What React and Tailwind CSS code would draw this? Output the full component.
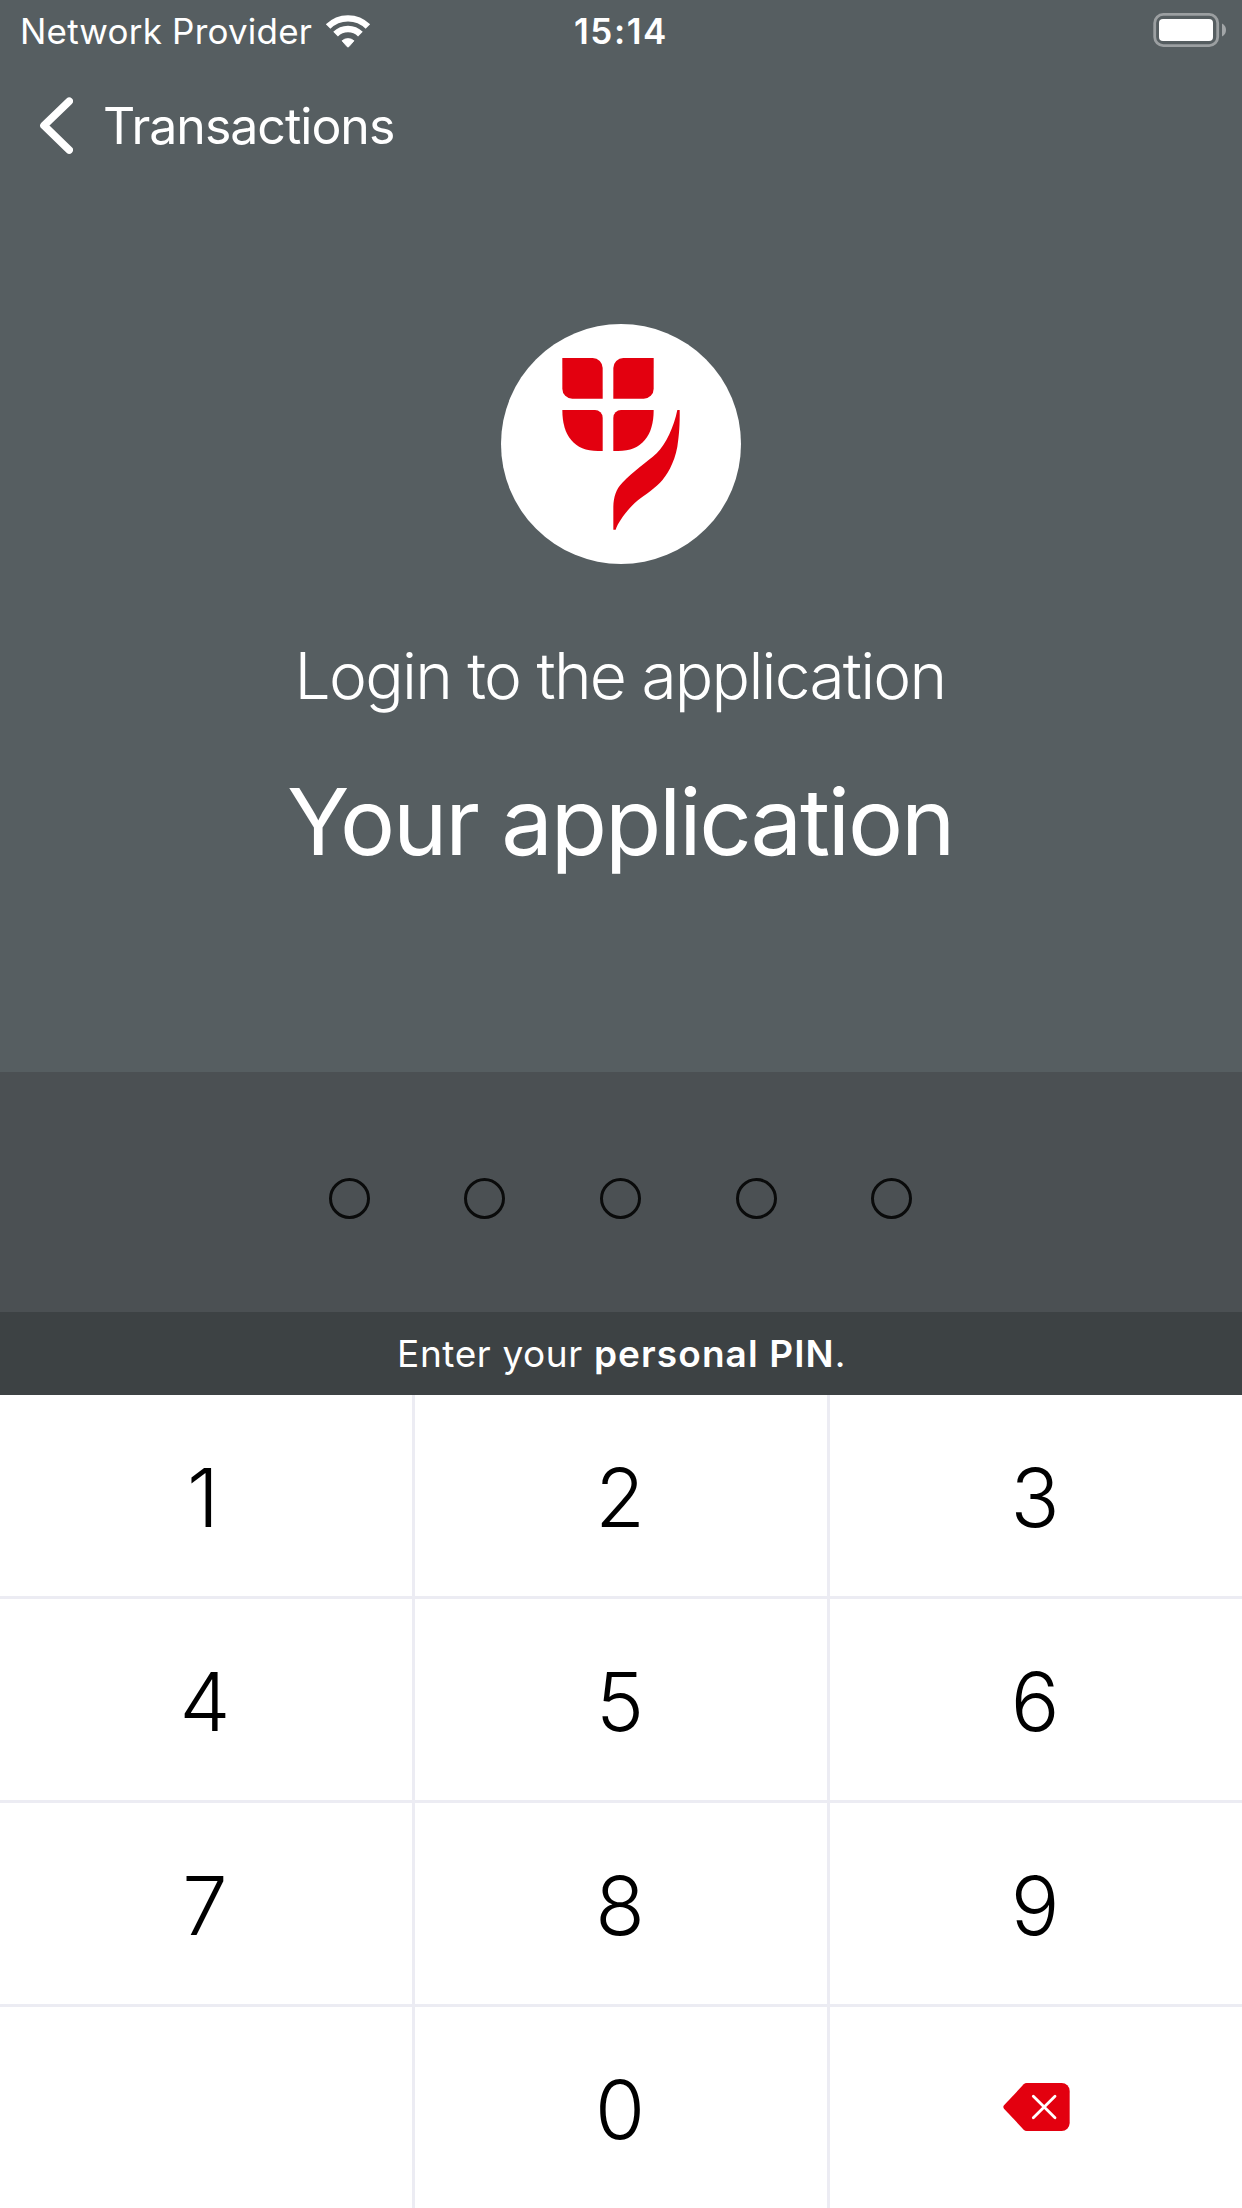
import React, { useState } from "react";

const PIN_LENGTH = 5;
const KEYS = ["1", "2", "3", "4", "5", "6", "7", "8", "9", "", "0", "del"];

const WifiIcon = () => (
  <svg width="46" height="36" viewBox="0 0 46 36" fill="none">
    <path d="M3.1 12.6A28.2 28.2 0 0 1 42.9 12.6" stroke="white" strokeWidth="6.4" />
    <path d="M10.6 20.1A17.5 17.5 0 0 1 35.4 20.1" stroke="white" strokeWidth="6.6" />
    <path
      d="M17 26.8A9.2 9.2 0 0 1 29 26.8L23.8 32.7Q23 33.5 22.2 32.7Z"
      fill="white"
      stroke="white"
      strokeWidth="0.8"
      strokeLinejoin="round"
    />
  </svg>
);

const BatteryIcon = () => (
  <svg width="73" height="34" viewBox="0 0 73 34">
    <rect x="1.7" y="1.4" width="63" height="31.2" rx="8.5" fill="none" stroke="#9b9fa1" strokeWidth="2.8" />
    <rect x="6" y="6" width="54" height="22" rx="4" fill="white" />
    <path d="M69 10.5C71.8 12 73 14.3 73 17C73 19.7 71.8 22 69 23.5Z" fill="#a2a6a8" />
  </svg>
);

const BackIcon = () => (
  <svg width="33" height="58" viewBox="0 0 33 58" fill="none">
    <path
      d="M29.2 4.2L4 28.6L29.2 53"
      stroke="white"
      strokeWidth="7.6"
      strokeLinecap="round"
      strokeLinejoin="round"
    />
  </svg>
);

const Logo = () => (
  <svg className="size-60" viewBox="33 42 720 720">
    <circle cx="393" cy="402" r="360" fill="white" />
    <g fill="#e3000f">
      <path d="M217 144H308A30 30 0 0 1 338 174V266H247A30 30 0 0 1 217 236Z" />
      <path d="M491 144H400A30 30 0 0 0 370 174V266H461A30 30 0 0 0 491 236Z" />
      <path d="M217 300H315A23 23 0 0 1 338 323V423H324C252 423 217 377 217 300Z" />
      <path d="M491 300H393A23 23 0 0 0 370 323V423H384C456 423 491 377 491 300Z" />
      <path d="M562 300H569C570 350 566 385 562 410C553 460 530 497 510 518C485 543 455 560 435 578C410 602 385 635 377 659H370V590C371 560 378 537 397 518C430 484 470 457 500 430C528 402 552 350 562 300Z" />
    </g>
  </svg>
);

const DeleteIcon = () => (
  <svg width="67" height="48" viewBox="68 69 201 144">
    <path
      d="M139 69H244A24 24 0 0 1 268 93V189A24 24 0 0 1 244 213H139Q134 213 130 209L71 146Q67 141 71 136L130 73Q134 69 139 69Z"
      fill="#e3000f"
    />
    <path d="M159 109L224 173M224 109L159 173" stroke="white" strokeWidth="8.5" strokeLinecap="round" />
  </svg>
);

export default function App() {
  const [pin, setPin] = useState("");

  const handleKey = (key) => {
    if (key === "del") {
      setPin(pin.slice(0, -1));
    } else if (key && pin.length < PIN_LENGTH) {
      setPin(pin + key);
    }
  };

  return (
    <div className="flex h-[2208px] w-full flex-col bg-[#565e61] font-['Inter','Liberation_Sans',sans-serif] text-white">
      <div className="flex h-[1072px] flex-col">
        {/* Status bar */}
        <div className="grid h-[63px] grid-cols-[1fr_auto_1fr] items-center pl-5 pr-4">
          <div className="flex items-center gap-[13px]">
            <span className="text-[35px] leading-[63px] tracking-[0.2px]">Network Provider</span>
            <WifiIcon />
          </div>
          <span className="pr-1 text-[35px] font-semibold leading-[63px] tracking-[1.6px]">15:14</span>
          <div className="flex justify-end pb-[3px]">
            <BatteryIcon />
          </div>
        </div>

        {/* Navigation */}
        <div className="flex h-[126px] items-center gap-[30px] pl-10">
          <BackIcon />
          <span className="text-[50px] leading-[60px] tracking-[-1px]">Transactions</span>
        </div>

        <div className="mt-[135px] flex flex-col items-center">
          <Logo />
          <p className="mt-16 pr-[2px] text-[64px] font-light leading-[96px] tracking-[-1.75px]">
            Login to the application
          </p>
          <h1 className="mt-[38px] pr-[2px] text-[92px] leading-[120px] tracking-[-2.2px]">
            Your application
          </h1>
        </div>
      </div>

      {/* PIN */}
      <div className="flex h-60 items-center justify-center gap-[94.7px] bg-[#4b5053] pr-px pt-[13px]">
        {Array.from({ length: PIN_LENGTH }).map((_, idx) => (
          <div
            key={idx}
            className={`size-[41px] rounded-full border-[3px] border-[#0a0b0b] ${idx < pin.length ? "bg-[#0a0b0b]" : ""}`}
          />
        ))}
      </div>
      <p className="h-[83px] bg-[#3d4244] pl-px text-center text-[37px] leading-[83px] tracking-[0.6px]">
        Enter your <span className="font-semibold tracking-[1.1px]">personal PIN</span>.
      </p>

      {/* Keypad */}
      <div className="grid flex-1 grid-cols-3 grid-rows-4 gap-[3px] bg-[#ececf3]">
        {KEYS.map((key, idx) => (
          <button
            key={idx}
            className="flex items-center justify-center bg-white text-[81px] font-light leading-none text-black"
            onClick={() => handleKey(key)}
          >
            {key === "del" ? (
              <span className="pb-px">
                <DeleteIcon />
              </span>
            ) : (
              <span className={key === "1" ? "pr-[6px] pt-[6px]" : "pr-[2px] pt-[6px]"}>{key}</span>
            )}
          </button>
        ))}
      </div>
    </div>
  );
}
